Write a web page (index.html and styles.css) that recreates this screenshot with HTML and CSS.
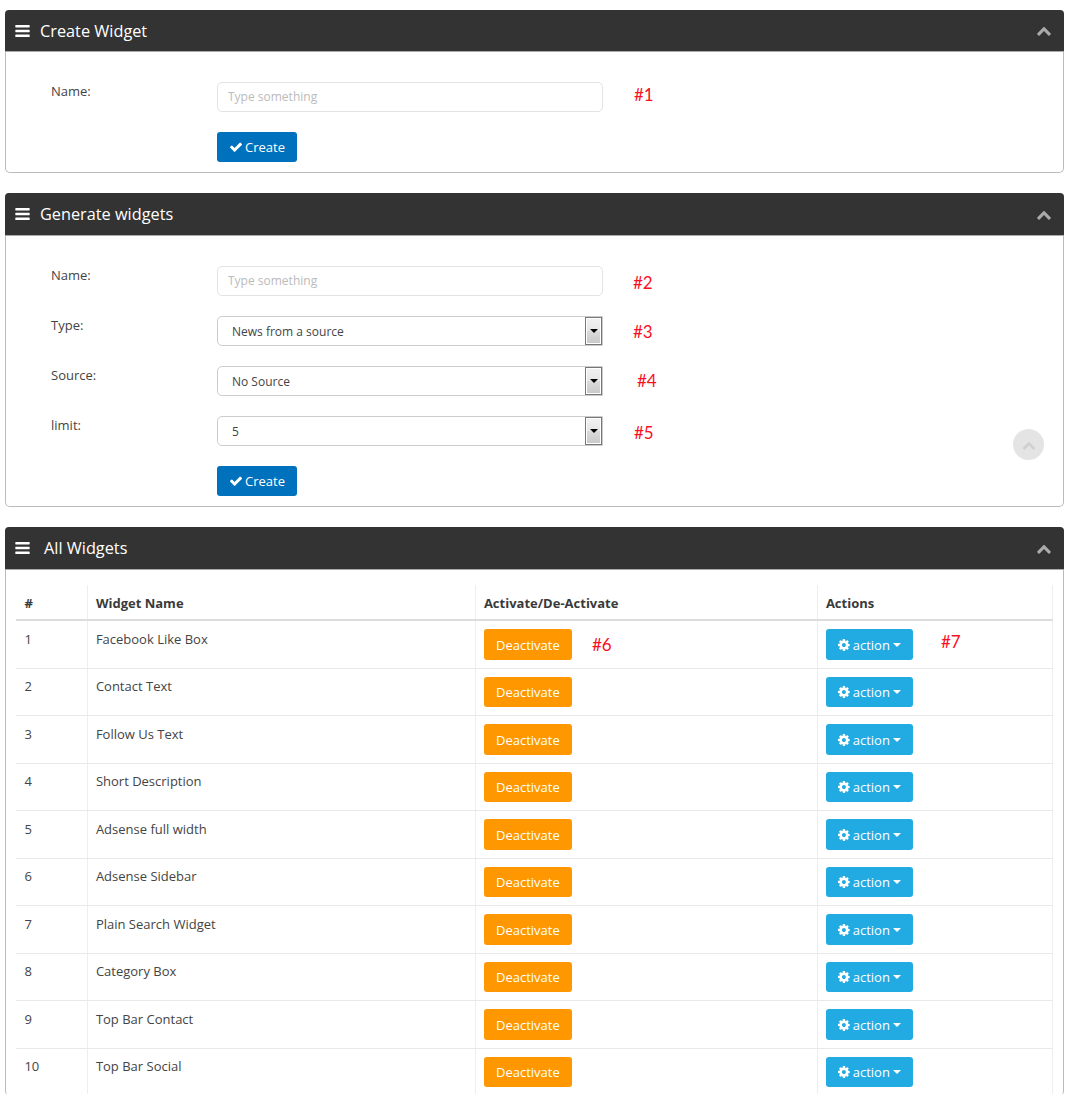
FILE: index.html
```html
<!DOCTYPE html>
<html lang="en">
<head>
<meta charset="utf-8">
<title>Widgets</title>
<link rel="stylesheet" href="styles.css">
</head>
<body>
<svg class="sprite" aria-hidden="true">
  <symbol id="bars" viewBox="128 256 1536 1280"><path d="M1664 1344v128q0 26-19 45t-45 19h-1408q-26 0-45-19t-19-45v-128q0-26 19-45t45-19h1408q26 0 45 19t19 45zm0-512v128q0 26-19 45t-45 19h-1408q-26 0-45-19t-19-45v-128q0-26 19-45t45-19h1408q26 0 45 19t19 45zm0-512v128q0 26-19 45t-45 19h-1408q-26 0-45-19t-19-45v-128q0-26 19-45t45-19h1408q26 0 45 19t19 45z"/></symbol>
  <symbol id="chev" viewBox="0 256 1792 1280"><path d="M1683 1331l-166 165q-19 19-45 19t-45-19l-531-531-531 531q-19 19-45 19t-45-19l-166-165q-19-19-19-45.5t19-45.5l742-741q19-19 45-19t45 19l742 741q19 19 19 45.5t-19 45.5z"/></symbol>
  <symbol id="check" viewBox="121 298 1550 1196"><path d="M1671 566q0 40-28 68l-724 724-136 136q-28 28-68 28t-68-28l-136-136-362-362q-28-28-28-68t28-68l136-136q28-28 68-28t68 28l294 295 656-657q28-28 68-28t68 28l136 136q28 28 28 68z"/></symbol>
  <symbol id="cog" viewBox="128 128 1536 1536"><path d="M1152 896q0-106-75-181t-181-75-181 75-75 181 75 181 181 75 181-75 75-181zm512-109v222q0 12-8 23t-20 13l-185 28q-19 54-39 91 35 50 107 138 10 12 10 25t-9 23q-27 37-99 108t-94 71q-12 0-26-9l-138-108q-44 23-91 38-16 136-29 186-7 28-36 28h-222q-14 0-24.5-8.5t-11.5-21.5l-28-184q-49-16-90-37l-141 107q-10 9-25 9-14 0-25-11-126-114-165-168-7-10-7-23 0-12 8-23 15-21 51-66.5t54-70.5q-27-50-41-99l-183-27q-13-2-21-12.5t-8-23.5v-222q0-12 8-23t19-13l186-28q14-46 39-92-40-57-107-138-10-12-10-24 0-10 9-23 26-36 98.5-107.5t94.5-71.5q13 0 26 10l138 107q44-23 91-38 16-136 29-186 7-28 36-28h222q14 0 24.5 8.5t11.5 21.5l28 184q49 16 90 37l142-107q9-9 24-9 13 0 25 10 129 119 165 170 7 8 7 22 0 12-8 23-15 21-51 66.5t-54 70.5q26 50 41 98l183 28q13 2 21 12.5t8 23.5z"/></symbol>
</svg>

<main class="page">
  <section class="panel">
    <header class="panel-head">
      <svg class="ico-bars"><use href="#bars"/></svg>
      <h2 class="panel-title">Create Widget</h2>
      <svg class="ico-chev"><use href="#chev"/></svg>
    </header>
    <form class="panel-body">
      <div class="row">
        <label class="lbl">Name:</label>
        <input class="field" type="text" placeholder="Type something">
      </div>
      <div class="row">
        <span class="lbl"></span>
        <button class="btn btn-create" type="button"><svg class="ico-check"><use href="#check"/></svg>Create</button>
      </div>
    </form>
  </section>

  <section class="panel">
    <header class="panel-head head-tall">
      <svg class="ico-bars"><use href="#bars"/></svg>
      <h2 class="panel-title">Generate widgets</h2>
      <svg class="ico-chev"><use href="#chev"/></svg>
    </header>
    <form class="panel-body">
      <div class="row">
        <label class="lbl">Name:</label>
        <input class="field" type="text" placeholder="Type something">
      </div>
      <div class="row">
        <label class="lbl">Type:</label>
        <div class="select-wrap"><select class="field select"><option>News from a source</option></select><span class="select-arrow"></span></div>
      </div>
      <div class="row">
        <label class="lbl">Source:</label>
        <div class="select-wrap"><select class="field select"><option>No Source</option></select><span class="select-arrow"></span></div>
      </div>
      <div class="row">
        <label class="lbl">limit:</label>
        <div class="select-wrap"><select class="field select"><option>5</option></select><span class="select-arrow"></span></div>
      </div>
      <div class="row">
        <span class="lbl"></span>
        <button class="btn btn-create" type="button"><svg class="ico-check"><use href="#check"/></svg>Create</button>
      </div>
    </form>
  </section>

  <section class="panel panel-last">
    <header class="panel-head head-tall">
      <svg class="ico-bars"><use href="#bars"/></svg>
      <h2 class="panel-title title-wide">All Widgets</h2>
      <svg class="ico-chev"><use href="#chev"/></svg>
    </header>
    <div class="table-wrap">
      <table class="tbl">
        <thead>
          <tr><th class="c1">#</th><th class="c2">Widget Name</th><th class="c3">Activate/De-Activate</th><th class="c4">Actions</th></tr>
        </thead>
        <tbody>
          <tr><td>1</td><td>Facebook Like Box</td><td><button class="btn btn-orange" type="button">Deactivate</button></td><td><button class="btn btn-blue" type="button"><svg class="ico-cog"><use href="#cog"/></svg>action<span class="caret"></span></button></td></tr>
          <tr><td>2</td><td>Contact Text</td><td><button class="btn btn-orange" type="button">Deactivate</button></td><td><button class="btn btn-blue" type="button"><svg class="ico-cog"><use href="#cog"/></svg>action<span class="caret"></span></button></td></tr>
          <tr><td>3</td><td>Follow Us Text</td><td><button class="btn btn-orange" type="button">Deactivate</button></td><td><button class="btn btn-blue" type="button"><svg class="ico-cog"><use href="#cog"/></svg>action<span class="caret"></span></button></td></tr>
          <tr><td>4</td><td>Short Description</td><td><button class="btn btn-orange" type="button">Deactivate</button></td><td><button class="btn btn-blue" type="button"><svg class="ico-cog"><use href="#cog"/></svg>action<span class="caret"></span></button></td></tr>
          <tr><td>5</td><td>Adsense full width</td><td><button class="btn btn-orange" type="button">Deactivate</button></td><td><button class="btn btn-blue" type="button"><svg class="ico-cog"><use href="#cog"/></svg>action<span class="caret"></span></button></td></tr>
          <tr><td>6</td><td>Adsense Sidebar</td><td><button class="btn btn-orange" type="button">Deactivate</button></td><td><button class="btn btn-blue" type="button"><svg class="ico-cog"><use href="#cog"/></svg>action<span class="caret"></span></button></td></tr>
          <tr><td>7</td><td>Plain Search Widget</td><td><button class="btn btn-orange" type="button">Deactivate</button></td><td><button class="btn btn-blue" type="button"><svg class="ico-cog"><use href="#cog"/></svg>action<span class="caret"></span></button></td></tr>
          <tr><td>8</td><td>Category Box</td><td><button class="btn btn-orange" type="button">Deactivate</button></td><td><button class="btn btn-blue" type="button"><svg class="ico-cog"><use href="#cog"/></svg>action<span class="caret"></span></button></td></tr>
          <tr><td>9</td><td>Top Bar Contact</td><td><button class="btn btn-orange" type="button">Deactivate</button></td><td><button class="btn btn-blue" type="button"><svg class="ico-cog"><use href="#cog"/></svg>action<span class="caret"></span></button></td></tr>
          <tr><td>10</td><td>Top Bar Social</td><td><button class="btn btn-orange" type="button">Deactivate</button></td><td><button class="btn btn-blue" type="button"><svg class="ico-cog"><use href="#cog"/></svg>action<span class="caret"></span></button></td></tr>
        </tbody>
      </table>
    </div>
  </section>

  <span class="mark m1">#1</span>
  <span class="mark m2">#2</span>
  <span class="mark m3">#3</span>
  <span class="mark m4">#4</span>
  <span class="mark m5">#5</span>
  <span class="mark m6">#6</span>
  <span class="mark m7">#7</span>
  <div class="to-top"><svg class="ico-top"><use href="#chev"/></svg></div>
</main>
</body>
</html>
```

FILE: styles.css
```css
* { box-sizing: border-box; }
html, body { margin: 0; height: 1094px; overflow: hidden; background: #fff; }
body { font: 13px/20px "Open Sans", sans-serif; color: #444; }
.sprite { display: none; }
.page { position: relative; padding: 10px 9px 0 5px; }

.panel { border: 1px solid #bbb; border-top: 0; border-radius: 5px; margin-bottom: 20px; background: #fff; }
.panel-last { border-bottom: 0; margin-bottom: 0; }
.panel-head {
  display: flex; align-items: center; height: 42px; margin: 0 -1px;
  padding: 0 12px 0 10px; background: #333; border-bottom: 1px solid #aaa;
  border-radius: 4px 4px 0 0; color: #fff;
}
.head-tall { height: 43px; }
.panel-title { flex: 1; margin: 0 0 0 10px; font-size: 16.3px; font-weight: 400; line-height: 22px; }
.title-wide { margin-left: 14px; }
.ico-bars { width: 15px; height: 12px; fill: #fff; }
.ico-chev { width: 16px; height: 11px; fill: #aaa; }

.panel-body { display: flex; flex-direction: column; gap: 20px; padding: 30px 0 10px 45px; }
.row { display: flex; align-items: flex-start; }
.lbl { width: 166px; line-height: 18px; color: #444; }
.field {
  width: 386px; height: 30px; padding: 0 10px 2px; border: 1px solid #e3e3e3; border-radius: 5px;
  background: #fff; font: 12px "Open Sans", sans-serif; color: #555;
}
.field::placeholder { color: #bbb; opacity: 1; }
.select-wrap { position: relative; width: 386px; height: 30px; }
.select { display: block; appearance: none; padding: 0 0 0 14px; border-color: #ccc; border-radius: 5px 0 0 5px; color: #444; }
.select-arrow {
  position: absolute; top: 1px; right: 1px; width: 17px; height: 28px;
  border: 1px solid #777; box-shadow: inset 0 0 0 1px #fff;
  background: linear-gradient(#f2f2f2, #e6e6e6 50%, #dcdcdc 50%, #c8c8c8);
}
.select-arrow::after {
  content: ""; position: absolute; left: 4px; top: 11px;
  border: 4px solid transparent; border-top-color: #000; border-bottom: 0;
}

.btn {
  display: inline-flex; align-items: center; justify-content: center; height: 30px; padding: 0 12px;
  border: 0; border-radius: 3px; color: #fff; font: 13px/20px "Open Sans", sans-serif;
}
.btn-create { width: 80px; padding-left: 13px; background: #0071bc; }
.btn-orange { width: 88px; height: 30.5px; margin-top: 0.4px; background: #ff9800; }
.btn-blue { width: 87px; height: 30.5px; margin-top: 0.4px; background: #22abe3; }
.ico-check { width: 13px; height: 10px; margin-right: 3px; fill: #fff; }
.ico-cog { width: 12px; height: 12px; margin-right: 3px; fill: #fff; }
.caret { width: 8px; height: 4px; margin-left: 3px; border-left: 4px solid transparent; border-right: 4px solid transparent; border-top: 4px solid #fff; }

.table-wrap { padding: 15px 10px 0; }
.tbl { width: 1036px; border-collapse: collapse; table-layout: fixed; color: #444; }
.tbl th, .tbl td { padding: 7.6px 8px 8px 8.4px; border-right: 1px solid #eee; border-bottom: 1px solid #e9e9e9; text-align: left; vertical-align: top; }
.tbl th { height: 34.4px; padding-top: 8px; padding-bottom: 6.4px; border-bottom: 2px solid #ddd; font-weight: 700; line-height: 20px; color: #3a3a3a; }
.tbl td { height: 47.5px; }
.c1 { width: 71px; }
.c2 { width: 388px; }
.c3 { width: 342px; }
.c4 { width: 235px; }

.mark { position: absolute; font: 17px/20px Lato, sans-serif; color: #f8101f; }
.m1 { left: 634px; top: 85px; }
.m2 { left: 633px; top: 273px; }
.m3 { left: 633px; top: 322px; }
.m4 { left: 637px; top: 371px; }
.m5 { left: 634px; top: 423px; }
.m6 { left: 592px; top: 635px; }
.m7 { left: 941px; top: 632px; }

.to-top { position: absolute; left: 1013px; top: 429px; display: flex; align-items: center; justify-content: center; width: 31px; height: 31px; border-radius: 50%; background: #e4e4e4; }
.ico-top { width: 14px; height: 10px; fill: #d0d0d0; }
```
